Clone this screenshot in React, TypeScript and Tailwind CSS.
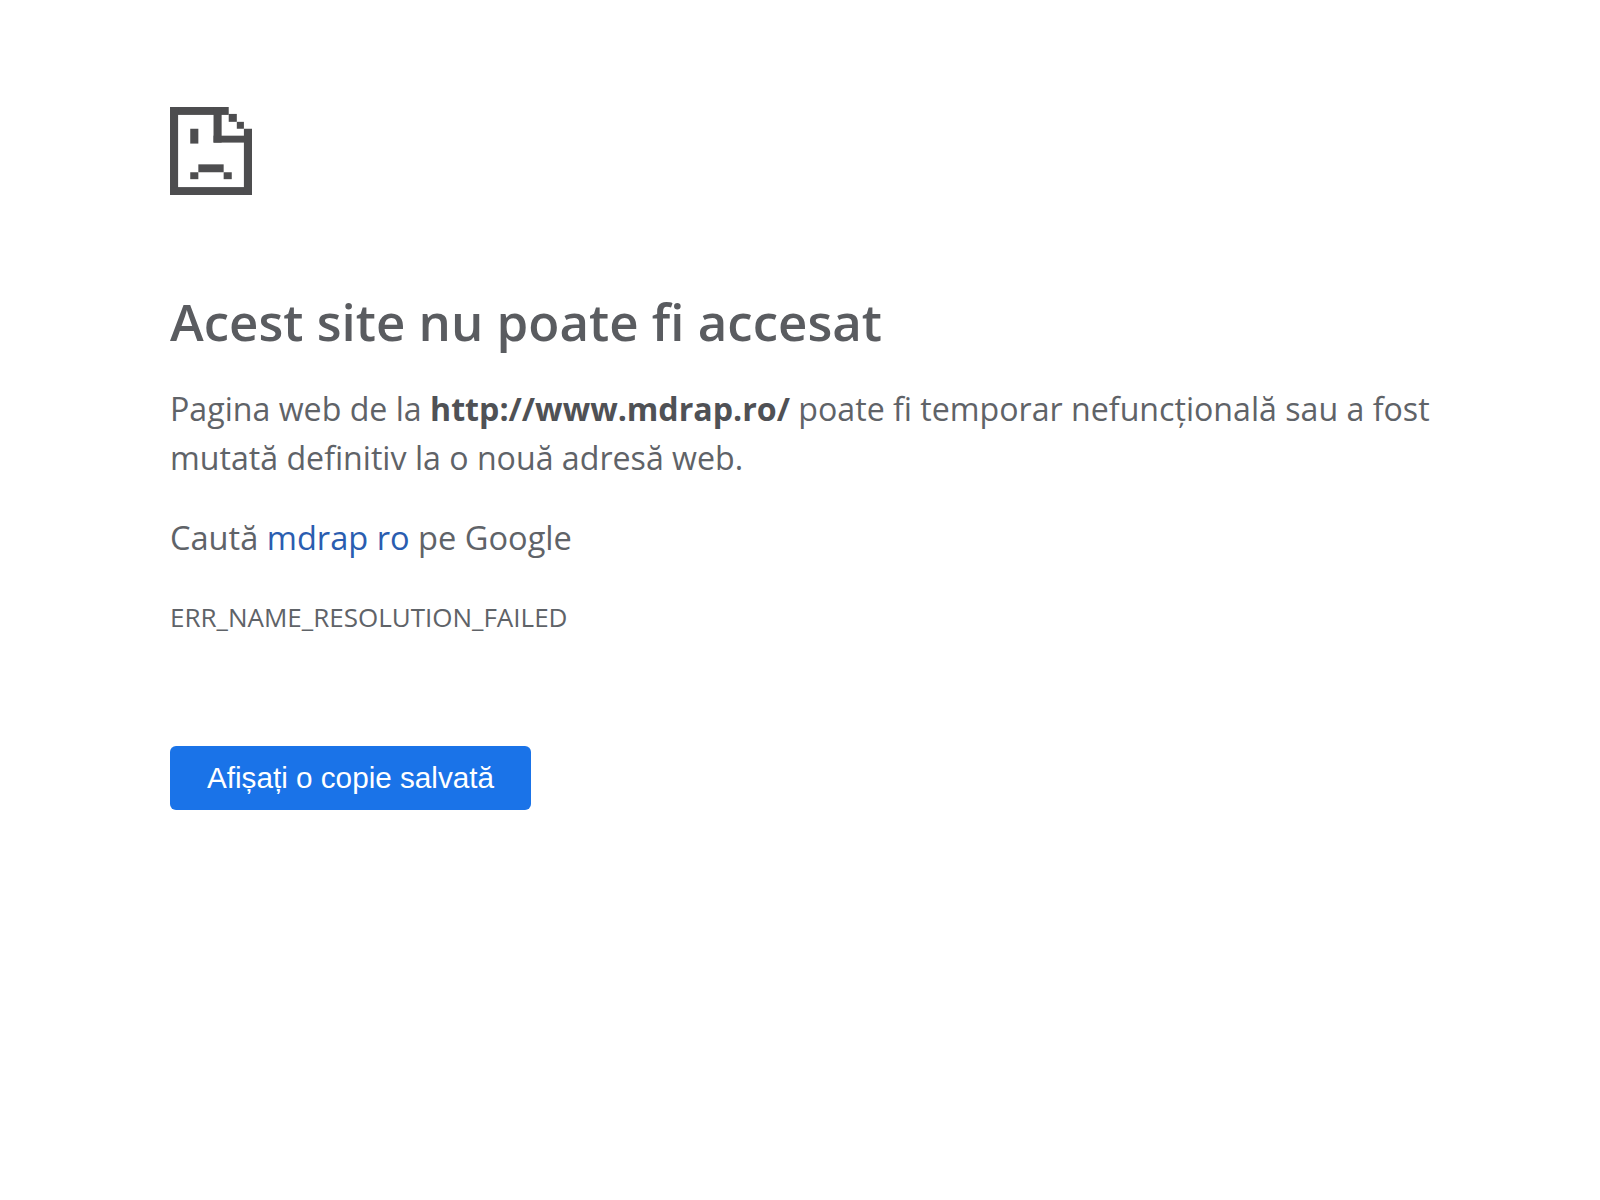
const PIXELS: [number, number, number, number][] = [
  // page outline
  [0, 0, 58, 8],
  [0, 0, 8, 89],
  [0, 81, 81, 8],
  [73, 22, 8, 67],
  // folded corner
  [43, 0, 8, 36],
  [43, 29, 38, 7],
  [58, 7, 8, 8],
  [66, 15, 7, 7],
  // eye
  [20, 22, 8, 15],
  // mouth
  [28, 58, 25, 8],
  [20, 66, 8, 7],
  [53, 66, 8, 7],
];

function SadPageIcon() {
  return (
    <svg width="82" height="88" viewBox="0 0 81 89" preserveAspectRatio="none" fill="#4d4d4f" className="block">
      {PIXELS.map(([x, y, w, h]) => (
        <rect key={`${x}-${y}`} x={x} y={y} width={w} height={h} />
      ))}
    </svg>
  );
}

export default function App() {
  return (
    <main className="min-h-[1200px] bg-white pl-[170px] pr-[150px] pt-[107px] font-['Open_Sans','Noto_Sans',sans-serif] text-[#5f6368]">
      <SadPageIcon />
      <h1 className="mt-[95px] text-[51px] font-semibold leading-[62px] text-[#5a5c60]">
        Acest site nu poate fi accesat
      </h1>
      <p className="mt-[32px] text-[32.15px] leading-[49px]">
        Pagina web de la <strong className="font-bold text-[#4f5155]">http://www.mdrap.ro/</strong> poate fi temporar
        nefuncțională sau a fost mutată definitiv la o nouă adresă web.
      </p>
      <p className="mt-[31px] text-[32.6px] leading-[49px]">
        Caută <a className="text-[#2a5db0]">mdrap ro</a> pe Google
      </p>
      <p className="mt-[37px] text-[26px] leading-[36px]">ERR_NAME_RESOLUTION_FAILED</p>
      <button
        type="button"
        className="mt-[111px] block h-[64px] w-[361px] rounded-[6px] bg-[#1a73e8] font-['Liberation_Sans',Arial,sans-serif] text-[29.7px] text-white"
      >
        Afișați o copie salvată
      </button>
    </main>
  );
}
